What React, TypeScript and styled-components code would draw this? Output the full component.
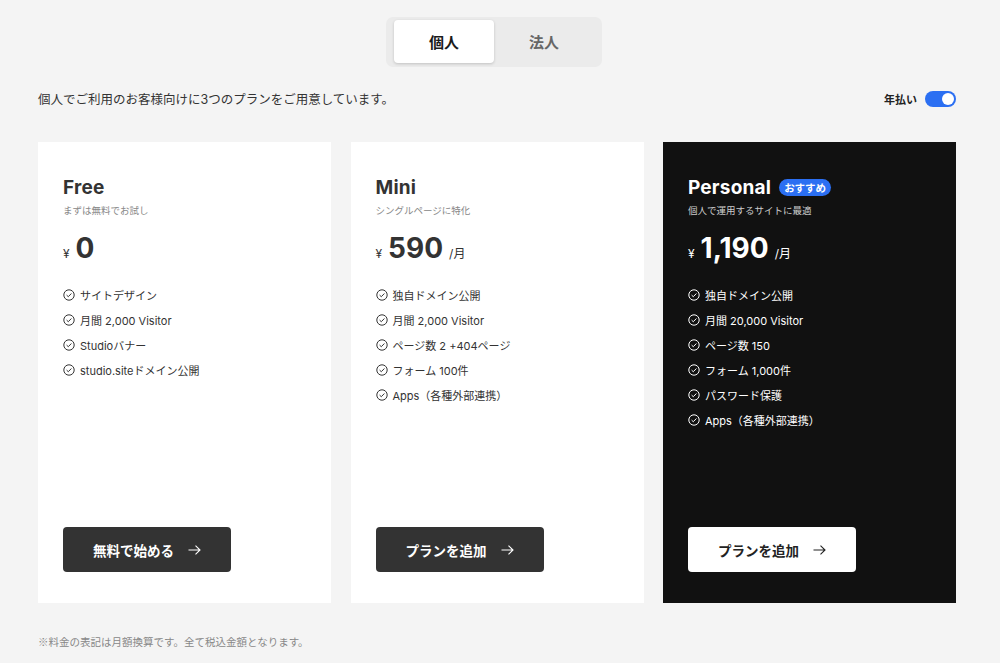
import * as React from "react";
import styled, { createGlobalStyle } from "styled-components";

const GlobalStyle = createGlobalStyle`
  html, body {
    margin: 0;
    padding: 0;
    background: #f4f4f4;
    font-family: Inter, "Noto Sans CJK JP", sans-serif;
    color: #333;
  }
`;

const Page = styled.div`
  width: 918px;
  margin: 0 0 0 38px;
  padding: 17px 0 0;
`;

const TabGroup = styled.div`
  display: flex;
  width: 200px;
  margin: 0 0 0 348px;
  padding: 3px 8px 4px;
  background: #ebebeb;
  border-radius: 7px;
`;

const Tab = styled.div<{ $active?: boolean }>`
  flex: 1;
  height: 43px;
  display: flex;
  align-items: center;
  justify-content: center;
  font-size: 15px;
  font-weight: 700;
  border-radius: 4px;
  color: ${(p) => (p.$active ? "#1a1a1a" : "#666")};
  background: ${(p) => (p.$active ? "#fff" : "transparent")};
  box-shadow: ${(p) => (p.$active ? "0 1px 3px rgba(0,0,0,0.18)" : "none")};
`;

const InfoRow = styled.div`
  display: flex;
  justify-content: space-between;
  align-items: center;
  margin-top: 23px;
  height: 17px;
`;

const Lead = styled.p`
  margin: 0;
  font-size: 12.5px;
  color: #333;
`;

const Billing = styled.div`
  display: flex;
  align-items: center;
  gap: 8px;
  font-size: 11px;
  font-weight: 700;
  color: #222;
`;

const Switch = styled.div`
  position: relative;
  width: 31px;
  height: 16px;
  border-radius: 8px;
  background: #2b6ff2;

  &::after {
    content: "";
    position: absolute;
    right: 2px;
    top: 2px;
    width: 12px;
    height: 12px;
    border-radius: 50%;
    background: #fff;
  }
`;

const Cards = styled.div`
  display: grid;
  grid-template-columns: repeat(3, 293px);
  justify-content: space-between;
  margin-top: 35px;
`;

const Card = styled.div<{ $dark?: boolean }>`
  display: flex;
  flex-direction: column;
  height: 461px;
  box-sizing: border-box;
  padding: 34px 25px 31px;
  background: ${(p) => (p.$dark ? "#111" : "#fff")};
  color: ${(p) => (p.$dark ? "#fff" : "#333")};
`;

const TitleRow = styled.div`
  display: flex;
  align-items: center;
  gap: 8px;
  height: 22px;
`;

const Title = styled.h2`
  margin: 0;
  font-size: 19px;
  font-weight: 700;
  letter-spacing: 0.2px;
`;

const Badge = styled.span`
  display: inline-flex;
  align-items: center;
  height: 17px;
  padding: 0 5px;
  border-radius: 9px;
  background: #2b6ff2;
  color: #fff;
  font-size: 10.5px;
  font-weight: 700;
`;

const Sub = styled.div<{ $dark?: boolean }>`
  margin-top: 5px;
  font-size: 9.5px;
  color: ${(p) => (p.$dark ? "#ccc" : "#888")};
`;

const PriceRow = styled.div`
  display: flex;
  align-items: baseline;
  margin-top: 14px;
  height: 36px;
`;

const Yen = styled.span`
  font-size: 12px;
  margin-right: 6px;
`;

const Amount = styled.span`
  font-size: 28px;
  font-weight: 700;
`;

const Unit = styled.span`
  font-size: 12px;
  margin-left: 6px;
`;

const Features = styled.ul`
  list-style: none;
  margin: 19px 0 0;
  padding: 0;
  display: flex;
  flex-direction: column;
  gap: 7px;
`;

const Feature = styled.li`
  display: flex;
  align-items: center;
  gap: 5px;
  height: 18px;
  font-size: 11px;
`;

const CtaButton = styled.button<{ $dark?: boolean }>`
  margin-top: auto;
  width: 168px;
  height: 45px;
  display: flex;
  align-items: center;
  justify-content: center;
  gap: 14px;
  border: none;
  border-radius: 4px;
  font-family: inherit;
  font-size: 13.5px;
  font-weight: 700;
  background: ${(p) => (p.$dark ? "#fff" : "#333")};
  color: ${(p) => (p.$dark ? "#222" : "#fff")};
`;

const Note = styled.p`
  margin: 31px 0 0;
  font-size: 10.5px;
  color: #888;
  font-family: "Noto Sans CJK JP", sans-serif;
`;

function CheckIcon() {
  return (
    <svg width="12" height="12" viewBox="0 0 12 12" fill="none">
      <circle cx="6" cy="6" r="5.2" stroke="currentColor" strokeWidth="1" />
      <path d="M3.6 6.1 L5.3 7.7 L8.4 4.5" stroke="currentColor" strokeWidth="1" />
    </svg>
  );
}

function ArrowIcon() {
  return (
    <svg width="13" height="10" viewBox="0 0 13 10" fill="none">
      <path d="M0.5 5 H12 M7.5 0.7 L12 5 L7.5 9.3" stroke="currentColor" strokeWidth="1.1" />
    </svg>
  );
}

type Plan = {
  name: string;
  sub: string;
  price: string;
  monthly: boolean;
  features: string[];
  cta: string;
  dark?: boolean;
  badge?: string;
};

const plans: Plan[] = [
  {
    name: "Free",
    sub: "まずは無料でお試し",
    price: "0",
    monthly: false,
    features: ["サイトデザイン", "月間 2,000 Visitor", "Studioバナー", "studio.siteドメイン公開"],
    cta: "無料で始める",
  },
  {
    name: "Mini",
    sub: "シングルページに特化",
    price: "590",
    monthly: true,
    features: ["独自ドメイン公開", "月間 2,000 Visitor", "ページ数 2 +404ページ", "フォーム 100件", "Apps（各種外部連携）"],
    cta: "プランを追加",
  },
  {
    name: "Personal",
    sub: "個人で運用するサイトに最適",
    price: "1,190",
    monthly: true,
    features: ["独自ドメイン公開", "月間 20,000 Visitor", "ページ数 150", "フォーム 1,000件", "パスワード保護", "Apps（各種外部連携）"],
    cta: "プランを追加",
    dark: true,
    badge: "おすすめ",
  },
];

export default function App() {
  return (
    <>
      <GlobalStyle />
      <Page>
        <TabGroup>
          <Tab $active>個人</Tab>
          <Tab>法人</Tab>
        </TabGroup>

        <InfoRow>
          <Lead>個人でご利用のお客様向けに3つのプランをご用意しています。</Lead>
          <Billing>
            年払い
            <Switch />
          </Billing>
        </InfoRow>

        <Cards>
          {plans.map((plan) => (
            <Card key={plan.name} $dark={plan.dark}>
              <TitleRow>
                <Title>{plan.name}</Title>
                {plan.badge && <Badge>{plan.badge}</Badge>}
              </TitleRow>
              <Sub $dark={plan.dark}>{plan.sub}</Sub>
              <PriceRow>
                <Yen>¥</Yen>
                <Amount>{plan.price}</Amount>
                {plan.monthly && <Unit>/月</Unit>}
              </PriceRow>
              <Features>
                {plan.features.map((f) => (
                  <Feature key={f}>
                    <CheckIcon />
                    {f}
                  </Feature>
                ))}
              </Features>
              <CtaButton $dark={plan.dark}>
                {plan.cta}
                <ArrowIcon />
              </CtaButton>
            </Card>
          ))}
        </Cards>

        <Note>※料金の表記は月額換算です。全て税込金額となります。</Note>
      </Page>
    </>
  );
}
